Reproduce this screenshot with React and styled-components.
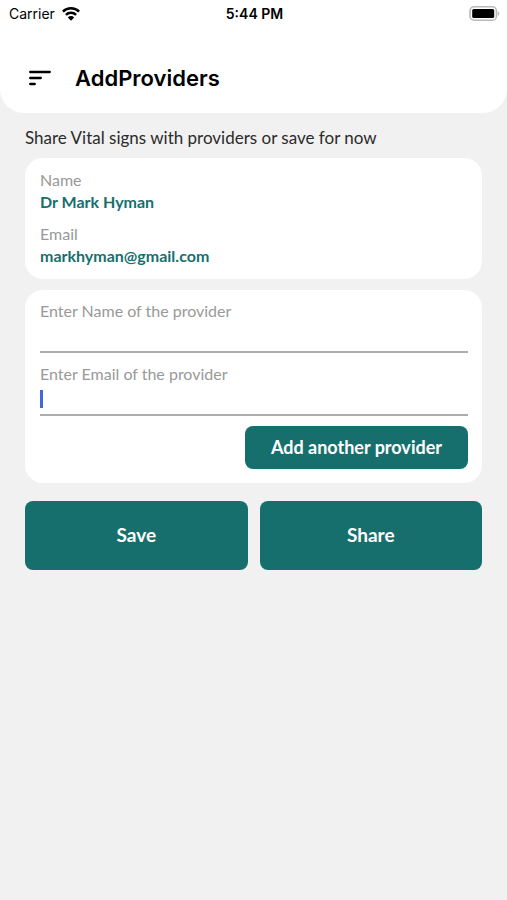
import { useState } from "react";
import styled, { createGlobalStyle } from "styled-components";

const providers = [{ name: "Dr Mark Hyman", email: "markhyman@gmail.com" }];

function App() {
  const [name, setName] = useState("");
  const [email, setEmail] = useState("");
  return (
    <>
      <GlobalStyle />
      <Header>
        <StatusBar>
          <Carrier>
            Carrier
            <WifiIcon />
          </Carrier>
          <Time>5:44 PM</Time>
          <BatteryIcon />
        </StatusBar>
        <TitleBar>
          <MenuButton type="button" aria-label="Open menu">
            <MenuIcon />
          </MenuButton>
          <Title>AddProviders</Title>
        </TitleBar>
      </Header>
      <Main>
        <Intro>Share Vital signs with providers or save for now</Intro>
        {providers.map((p) => (
          <ProviderCard key={p.email}>
            <div>
              <dt>Name</dt>
              <dd>{p.name}</dd>
            </div>
            <div>
              <dt>Email</dt>
              <dd>{p.email}</dd>
            </div>
          </ProviderCard>
        ))}
        <FormCard onSubmit={(e) => e.preventDefault()}>
          <Field>
            <Label htmlFor="provider-name">Enter Name of the provider</Label>
            <Input
              id="provider-name"
              type="text"
              placeholder=" "
              value={name}
              onChange={(e) => setName(e.target.value)}
            />
          </Field>
          <Field>
            <Label htmlFor="provider-email">Enter Email of the provider</Label>
            <Input
              id="provider-email"
              type="email"
              placeholder=" "
              autoFocus
              value={email}
              onChange={(e) => setEmail(e.target.value)}
            />
          </Field>
          <AddButton type="submit">Add another provider</AddButton>
        </FormCard>
        <Actions>
          <ActionButton type="button">Save</ActionButton>
          <ActionButton type="button">Share</ActionButton>
        </Actions>
      </Main>
    </>
  );
}

function WifiIcon() {
  return (
    <svg width="18" height="14" viewBox="0 0 18 14" aria-hidden="true">
      <g fill="none" stroke="#000" strokeWidth="2.5">
        <path d="M0.9 4.6a11.5 11.5 0 0 1 16.2 0" />
        <path d="M3.9 7.9a7.2 7.2 0 0 1 10.2 0" />
      </g>
      <path d="M9 13.7L5.8 10.4a4.6 4.6 0 0 1 6.4 0z" fill="#000" />
    </svg>
  );
}

function BatteryIcon() {
  return (
    <svg width="31" height="15" viewBox="0 0 31 15" aria-hidden="true">
      <rect
        x="1"
        y="0.8"
        width="26.4"
        height="13.4"
        rx="4"
        fill="#fff"
        stroke="#b9b9b9"
        strokeWidth="1.6"
      />
      <rect x="3.2" y="3" width="22" height="9" rx="1.6" fill="#000" />
      <path d="M28.6 5.2c1.1 0.4 1.8 1.3 1.8 2.3s-0.7 1.9-1.8 2.3z" fill="#b9b9b9" />
    </svg>
  );
}

function MenuIcon() {
  return (
    <svg width="24" height="18" viewBox="0 0 24 18" aria-hidden="true">
      <path
        d="M2.2 3h19.6M2.2 9h10.6M2.2 15h4.6"
        fill="none"
        stroke="#000"
        strokeWidth="2.3"
        strokeLinecap="round"
      />
    </svg>
  );
}

const teal = "#176f6d";

const GlobalStyle = createGlobalStyle`
  * {
    box-sizing: border-box;
  }
  body {
    margin: 0;
    background-color: #f1f1f1;
    font-family: Lato, "Open Sans", sans-serif;
  }
`;

const Header = styled.header`
  padding-bottom: 16px;
  background-color: #fff;
  border-radius: 0 0 24px 24px;
  font-family: Inter, "Liberation Sans", sans-serif;
`;

const StatusBar = styled.div`
  display: grid;
  grid-template-columns: 1fr auto 1fr;
  align-items: center;
  height: 27px;
  padding: 0 7px 0 9px;
  font-size: 14px;
  svg:last-child {
    justify-self: end;
  }
`;

const Carrier = styled.span`
  display: flex;
  align-items: center;
  gap: 7px;
`;

const Time = styled.span`
  font-weight: 600;
`;

const TitleBar = styled.div`
  display: flex;
  align-items: center;
  gap: 23px;
  margin-top: 32px;
  padding: 0 28px;
`;

const MenuButton = styled.button`
  display: flex;
  padding: 0;
  border: 0;
  background: none;
  cursor: pointer;
`;

const Title = styled.h1`
  margin: 0;
  font-size: 22px;
  font-weight: 600;
  line-height: 38px;
`;

const Main = styled.main`
  padding: 14px 25px;
`;

const Intro = styled.p`
  margin: 0 0 9px;
  font-size: 17px;
  line-height: 22px;
  color: #2b2b2b;
`;

const ProviderCard = styled.dl`
  display: flex;
  flex-direction: column;
  gap: 10px;
  margin: 0 0 11px;
  padding: 11px 15px 12px;
  border-radius: 18px;
  background-color: #fff;
  font-size: 16px;
  line-height: 22px;
  dt {
    color: #999;
  }
  dd {
    margin: 0;
    font-weight: 700;
    color: ${teal};
  }
`;

const FormCard = styled.form`
  display: flex;
  flex-direction: column;
  gap: 10px;
  padding: 10px 14px 14px 15px;
  border-radius: 18px;
  background-color: #fff;
`;

const Field = styled.div`
  display: flex;
  flex-direction: column;
`;

const Label = styled.label`
  font-size: 16px;
  line-height: 22px;
  color: #999;
`;

const Input = styled.input`
  width: 100%;
  height: 31px;
  padding: 0;
  border: 0;
  border-bottom: 2px solid #adadad;
  border-radius: 0;
  outline: none;
  background: none;
  font-family: inherit;
  font-size: 16px;
  caret-color: #4268dc;
  /* thick steady caret while the field is empty */
  &:focus:placeholder-shown {
    caret-color: transparent;
    background: linear-gradient(#4268dc, #4268dc) 0 5px / 3px 18px no-repeat;
  }
`;

const Button = styled.button`
  border: 0;
  border-radius: 8px;
  background-color: ${teal};
  color: #fff;
  font-family: inherit;
  font-weight: 700;
  cursor: pointer;
`;

const AddButton = styled(Button)`
  align-self: flex-end;
  height: 43px;
  padding: 0 26px 2px;
  font-size: 18px;
`;

const Actions = styled.div`
  display: grid;
  grid-template-columns: 1fr 1fr;
  gap: 12px;
  margin-top: 18px;
`;

const ActionButton = styled(Button)`
  height: 69px;
  padding: 0 0 2px;
  font-size: 19px;
`;

export default App;
